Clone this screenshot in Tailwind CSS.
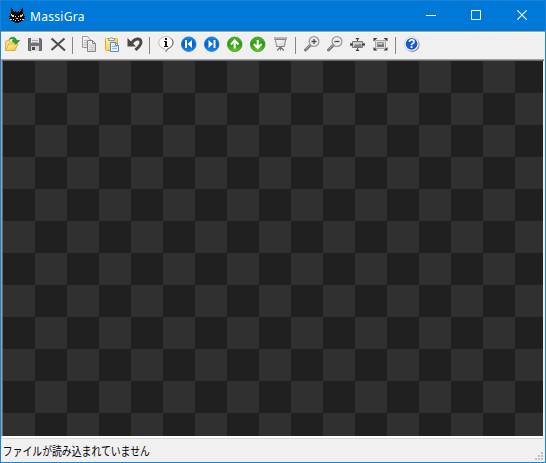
<!DOCTYPE html>
<html lang="ja">
<head>
<meta charset="utf-8">
<title>MassiGra</title>
<script src="https://cdn.jsdelivr.net/npm/@tailwindcss/browser@4"></script>
</head>
<body class="overflow-hidden">
<svg class="absolute h-0 w-0">
  <defs>
    <linearGradient id="blue" x2="0" y2="1"><stop stop-color="#078bf0"/><stop offset=".5" stop-color="#075fc4"/><stop offset="1" stop-color="#128ff0"/></linearGradient>
    <linearGradient id="green" x2="0" y2="1"><stop stop-color="#4eb52c"/><stop offset=".5" stop-color="#299a10"/><stop offset="1" stop-color="#66cf27"/></linearGradient>
    <linearGradient id="gold" x2="1" y2="1"><stop stop-color="#fff5a8"/><stop offset="1" stop-color="#efbd3a"/></linearGradient>
    <linearGradient id="paper" x2="1" y2="1"><stop stop-color="#fff"/><stop offset="1" stop-color="#cecece"/></linearGradient>
  </defs>
</svg>
<div class="flex h-[463px] w-[546px] flex-col border border-[#1883d7] bg-[#f0f0f0]">
  <header class="flex h-[30px] shrink-0 items-center bg-[#0078d7] text-white">
    <svg class="ml-2 h-4 w-4 shrink-0" viewBox="0 0 16 16" shape-rendering="crispEdges">
      <path d="M2 0h1v1h1v2h1v1h1V3h1v1h2V3h1v1h1V3h1V1h1V0h1v6h1v2h1v1h-1v1h1v1h-1v1h-1v1h-2v1h-2v1H6v-1H4v-1H2v-1H1v-1H0v-1h1V9H0V8h1V6h1z" fill="#080808"/>
      <path d="M2 6h1v1h3v1h1v1H3V8H2zM13 6h1v2h-1v1H9V8h1V7h3z" fill="#f4df48"/>
      <path d="M5 7h1v2H5zM10 7h1v2h-1z" fill="#080808"/>
      <path d="M1 11h2v1H1zM13 11h2v1h-2zM4 11h1v1H4zM6 12h1v1H6zM9 12h1v1H9zM11 11h1v1h-1zM7 10h2v1H7z" fill="#d8d2b8"/>
    </svg>
    <span class="ml-[5px] pt-[2px] font-['Noto_Sans','Noto_Sans_CJK_JP',sans-serif] text-[12px] leading-4 tracking-[.3px]">MassiGra</span>
    <div class="ml-auto flex h-full items-center">
      <div class="flex w-[45px] justify-center"><svg class="h-[11px] w-[10px] -translate-y-px" viewBox="0 0 10 11"><path d="M0 5.5h10" stroke="#fff"/></svg></div>
      <div class="flex w-[46px] justify-center"><svg class="h-[10px] w-[10px] -translate-y-px" viewBox="0 0 10 10"><path d="M.5.5h9v9h-9z" fill="none" stroke="#fff"/></svg></div>
      <div class="flex w-[46px] justify-center"><svg class="h-[10px] w-[10px] -translate-y-px" viewBox="0 0 10 10"><path d="M.3.3l9.4 9.4M9.7.3L.3 9.7" stroke="#fff" stroke-width="1.1"/></svg></div>
    </div>
  </header>
  <div class="h-px shrink-0 bg-[#a0a0a0]"></div>
  <div class="h-px shrink-0 bg-white"></div>
  <nav class="flex h-[26px] shrink-0 pt-[3px]">
    <div class="w-[23px] pl-[3px]"><svg class="h-4 w-4" viewBox="0 0 16 16">
      <path d="M1.5 14.5v-9l1-1h3l1 1.500h5v8z" fill="#f8dc78" stroke="#d2a73b" stroke-width=".8"/>
      <path d="M1.800 14.500l3-6.500h9.200l-3 6.500z" fill="url(#gold)" stroke="#dba92f" stroke-width=".8"/>
      <path d="M5 3.500C7 .3 12 .5 12.500 4.500H15.500L12 8.300 8 4.500h2C9.500 2.500 7 2.300 5 3.500z" fill="#2ca22d" stroke="#16751e" stroke-width=".6"/>
    </svg></div>
    <div class="w-[23px] pl-[3px]"><svg class="h-4 w-4" viewBox="0 0 16 16">
      <path d="M1.500 2.500h12l1 1v11h-13z" fill="#737373" stroke="#606060"/>
      <path d="M4 2h8v5H4z" fill="#e7e7e7"/><path d="M5 4.500h6M5 6.500h6" stroke="#aaa"/>
      <path d="M4 10h8v5H4z" fill="#d8d8d8"/><path d="M5 11h3v3H5z" fill="#484848"/>
    </svg></div>
    <div class="w-[23px] pl-[3px]"><svg class="h-4 w-4" viewBox="0 0 16 16"><path d="M1.500 2.500l13.500 12M14.500 2.500l-13 11.500" stroke="#505050" stroke-width="2.200"/></svg></div>
    <div class="w-2 pl-[2px] pt-px"><div class="h-[17px] w-px bg-[#858585]"></div></div>
    <div class="w-[23px] pl-[3px]"><svg class="h-4 w-4" viewBox="0 0 16 16">
      <path d="M1.500.5h5l3 3v8h-8z" fill="url(#paper)" stroke="#999"/><path d="M3 4.500h3M3 6.500h3M3 8.500h3" stroke="#c1c1c1"/>
      <path d="M6.500 4.500h5l3 3v8h-8z" fill="url(#paper)" stroke="#858585"/><path d="M11.500 4.500v3h3" fill="none" stroke="#858585"/><path d="M8 9.500h5M8 11.500h5M8 13.500h5" stroke="#ccc"/>
    </svg></div>
    <div class="w-[23px] pl-[3px]"><svg class="h-4 w-4" viewBox="0 0 16 16">
      <rect x="1.500" y="2.500" width="12" height="12" rx="1" fill="url(#gold)" stroke="#dcaa38"/>
      <path d="M4.500 4.500v-2h2l1-1.500 1 1.500h2v2z" fill="#eee" stroke="#929ba8"/>
      <path d="M6.500 6.500h5l3 3v6h-8z" fill="#e4f0fb" stroke="#5c8dbe"/><path d="M11.500 6.500v3h3" fill="none" stroke="#5c8dbe"/><path d="M8 10.500h5M8 12.500h5" stroke="#98b8dd"/>
    </svg></div>
    <div class="w-[23px] pl-[3px]"><svg class="h-4 w-4" viewBox="0 0 16 16">
      <path d="M4 8.500C7 2 14 1 14 6.300c0 3-2.500 5-5.500 7.700" fill="none" stroke="#484848" stroke-width="3"/><path d="M.5 2v8.500H9z" fill="#484848"/>
    </svg></div>
    <div class="w-2 pl-[2px] pt-px"><div class="h-[17px] w-px bg-[#858585]"></div></div>
    <div class="w-[23px] pl-[3px]"><svg class="h-4 w-4" viewBox="0 0 16 16">
      <path d="M8 .6c4.300 0 7.200 2.700 7.200 6.200 0 3.200-2.500 5.200-5.500 5.900L8 15.500 6.300 12.700C3.300 12 .8 10 .8 6.800.8 3.300 3.700.6 8 .6z" fill="#fff" stroke="#b5b5b5"/>
      <path d="M13 2.300c4 4 1.500 9-3.300 10.400L8 15.500" fill="none" stroke="#666"/>
      <path d="M7 2h2v2H7zM6 5h3v5h1v1H6v-1h1V6H6z" fill="#151515"/>
    </svg></div>
    <div class="w-[23px] pl-[3px]"><svg class="h-4 w-4" viewBox="0 0 16 16"><circle cx="7.700" cy="8.200" r="7.300" fill="url(#blue)" stroke="#2871c9" stroke-width=".8"/><path d="M4 4h2v8H4zM11 4v8L6.500 8z" fill="#fff"/></svg></div>
    <div class="w-[23px] pl-[3px]"><svg class="h-4 w-4" viewBox="0 0 16 16"><circle cx="7.700" cy="8.200" r="7.300" fill="url(#blue)" stroke="#2871c9" stroke-width=".8"/><path d="M9.500 4h2v8h-2zM4.500 4v8L9 8z" fill="#fff"/></svg></div>
    <div class="w-[23px] pl-[3px]"><svg class="h-4 w-4" viewBox="0 0 16 16"><circle cx="7.700" cy="8.300" r="7.300" fill="url(#green)" stroke="#3a9822" stroke-width=".8"/><path d="M7.700 12.500V5M3.800 8.500l3.900-3.900 3.900 3.900" fill="none" stroke="#fff" stroke-width="2.100"/></svg></div>
    <div class="w-[23px] pl-[3px]"><svg class="h-4 w-4" viewBox="0 0 16 16"><circle cx="7.700" cy="8.300" r="7.300" fill="url(#green)" stroke="#3a9822" stroke-width=".8"/><path d="M7.700 4v7.500M3.800 8l3.900 3.900L11.600 8" fill="none" stroke="#fff" stroke-width="2.100"/></svg></div>
    <div class="w-[23px] pl-[3px]"><svg class="h-4 w-4" viewBox="0 0 16 16">
      <path d="M2.500 3.500h10l-1 7h-8z" fill="url(#paper)" stroke="#858585"/><path d="M1 2.500h13" stroke="#858585" stroke-width="2"/><path d="M1.500 2.300h12" stroke="#d0d0d0" stroke-width=".7"/>
      <path d="M7.500 11v3.500M7.500 11L4 14.500M7.500 11l3.500 3.500" stroke="#777" stroke-width="1.200"/>
    </svg></div>
    <div class="w-2 pl-[2px] pt-px"><div class="h-[17px] w-px bg-[#858585]"></div></div>
    <div class="w-[23px] pl-[3px]"><svg class="h-4 w-4" viewBox="0 0 16 16">
      <path d="M6.500 9l-5 5" stroke="#777" stroke-width="3" stroke-linecap="round"/><path d="M6 9l-4.500 4.500" stroke="#aaa" stroke-width="1"/><circle cx="10" cy="5.500" r="4.900" fill="#eee" stroke="#999" stroke-width="1.200"/><path d="M7.500 5.500h5M10 3v5" stroke="#484848" stroke-width="1.300"/>
    </svg></div>
    <div class="w-[23px] pl-[3px]"><svg class="h-4 w-4" viewBox="0 0 16 16">
      <path d="M6.500 9l-5 5" stroke="#777" stroke-width="3" stroke-linecap="round"/><path d="M6 9l-4.500 4.500" stroke="#aaa" stroke-width="1"/><circle cx="10" cy="5.500" r="4.900" fill="#eee" stroke="#999" stroke-width="1.200"/><path d="M7.500 5.500h5" stroke="#484848" stroke-width="1.300"/>
    </svg></div>
    <div class="w-[23px] pl-[3px]"><svg class="h-4 w-4" viewBox="0 0 16 16">
      <path d="M2.500 5.500h10v6h-10z" fill="#ccc" stroke="#777"/><path d="M4 10l2-2 2 1 2-1.500 1.500 1V11H4z" fill="#858585"/>
      <path d="M5.500 2h4l-2 2.500zM5.500 15h4l-2-2.500zM.5 6.500v4L3 8.500zM14.500 6.500v4L12 8.500z" fill="#333"/>
      <path d="M7.500 2v3M7.500 12v3M0 8.500h3M12 8.500h3" stroke="#444"/>
    </svg></div>
    <div class="w-[23px] pl-[3px]"><svg class="h-4 w-4" viewBox="0 0 16 16">
      <path d="M2.500 4.500h10v8h-10z" fill="#ddd" stroke="#aaa"/><path d="M4.500 6.500h6v4h-6z" fill="#c5c5c5" stroke="#999"/><path d="M4 10l2-2 2 1 2-1.500 1 1V11H4z" fill="#777"/>
      <path d="M.5 2h4L.5 5.500zM14.500 2h-4l4 3.500zM.5 14.500h4L.5 11zM14.500 14.500h-4l4-3.500z" fill="#383838"/>
    </svg></div>
    <div class="w-2 pl-[2px] pt-px"><div class="h-[17px] w-px bg-[#858585]"></div></div>
    <div class="w-[23px] pl-[3px]"><svg class="h-4 w-4" viewBox="0 0 16 16">
      <circle cx="8.300" cy="8.700" r="7.200" fill="#777"/><circle cx="7.600" cy="7.800" r="7.200" fill="#fff" stroke="#b8bdca" stroke-width=".7"/><circle cx="7.600" cy="7.800" r="5.900" fill="#1758cf"/>
      <text x="7.600" y="12.200" text-anchor="middle" class="fill-white font-['Liberation_Sans',sans-serif] text-[12px] font-bold">?</text>
    </svg></div>
  </nav>
  <main class="mr-px h-[379px] shrink-0 border border-b-2 border-r-0 border-[#a0a0a0] border-b-white">
    <div class="h-full border-t border-[#696969] pr-px">
      <svg class="block h-full w-full">
        <defs><pattern id="checks" x="1" width="64" height="64" patternUnits="userSpaceOnUse"><path d="M0 0h64v64H0z" fill="#202020"/><path d="M32 0h32v32H32zM0 32h32v32H0z" fill="#303030"/></pattern></defs>
        <rect width="100%" height="100%" fill="url(#checks)"/><path d="M.5 0v400" stroke="#696969"/>
      </svg>
    </div>
  </main>
  <footer class="flex flex-1 items-end justify-between border-t border-[#d7d7d7]">
    <span class="ml-px origin-left scale-x-[.82] self-center whitespace-nowrap pl-px font-['Noto_Sans_CJK_JP',sans-serif] text-[12px] leading-4 text-black">ファイルが読み込まれていません</span>
    <svg class="mb-[2px] mr-[2px] h-2 w-2" viewBox="0 0 8 8"><path d="M6 0h2v2H6zM3 3h2v2H3zM6 3h2v2H6zM0 6h2v2H0zM3 6h2v2H3zM6 6h2v2H6z" fill="#bfbfbf"/></svg>
  </footer>
</div>
</body>
</html>
